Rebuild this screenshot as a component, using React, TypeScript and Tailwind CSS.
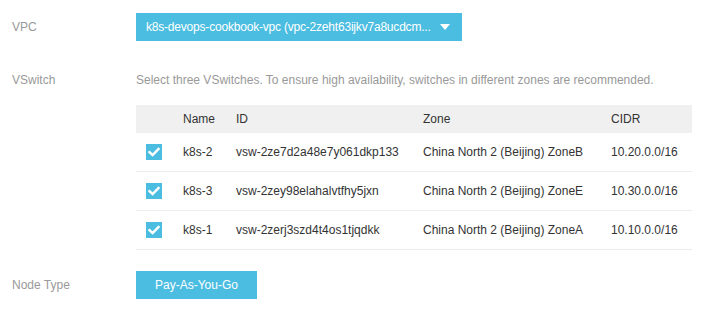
import React from "react";

const rows = [
  { name: "k8s-2", id: "vsw-2ze7d2a48e7y061dkp133", zone: "China North 2 (Beijing) ZoneB", cidr: "10.20.0.0/16" },
  { name: "k8s-3", id: "vsw-2zey98elahalvtfhy5jxn", zone: "China North 2 (Beijing) ZoneE", cidr: "10.30.0.0/16" },
  { name: "k8s-1", id: "vsw-2zerj3szd4t4os1tjqdkk", zone: "China North 2 (Beijing) ZoneA", cidr: "10.10.0.0/16" },
];

function Check() {
  return (
    <div className="w-4 h-4 bg-[#4bbde1] flex items-center justify-center">
      <svg width="12" height="10" viewBox="0 0 12 10">
        <path d="M1.5 5.2 L4.6 8 L10.5 2" stroke="white" strokeWidth="2.4" fill="none" strokeLinecap="square" />
      </svg>
    </div>
  );
}

export default function App() {
  return (
    <div className="w-[716px] h-[314px] bg-white text-[12px] text-[#333] pl-3 pt-[13px]" style={{ fontFamily: '"Liberation Sans", Arial, sans-serif' }}>
      <div className="flex items-center h-7">
        <div className="w-[124px] text-[#999]">VPC</div>
        <div className="w-[326px] h-7 bg-[#4bbde1] text-white flex items-center pl-[10px] pr-3 justify-between whitespace-nowrap">
          <span className="tracking-[-0.2px]">k8s-devops-cookbook-vpc (vpc-2zeht63ijkv7a8ucdcm...</span>
          <svg width="10" height="6" viewBox="0 0 10 6" className="shrink-0"><path d="M0 0 H10 L5 6 Z" fill="white" /></svg>
        </div>
      </div>
      <div className="flex mt-[32px]">
        <div className="w-[124px] text-[#999] leading-[14px]">VSwitch</div>
        <div className="w-[556px]">
          <div className="text-[#999] leading-[14px] whitespace-nowrap">Select three VSwitches. To ensure high availability, switches in different zones are recommended.</div>
          <div className="mt-[18px]">
            <div className="flex items-center h-7 bg-[#f0f0f0]">
              <div className="w-[47px]" />
              <div className="w-[53px]">Name</div>
              <div className="w-[187px]">ID</div>
              <div className="w-[188px]">Zone</div>
              <div>CIDR</div>
            </div>
            {rows.map((r) => (
              <div key={r.name} className="flex items-center h-[39px] border-b border-[#ececec] whitespace-nowrap">
                <div className="w-[47px] pl-[10px]"><Check /></div>
                <div className="w-[53px]">{r.name}</div>
                <div className="w-[187px]">{r.id}</div>
                <div className="w-[188px]">{r.zone}</div>
                <div>{r.cidr}</div>
              </div>
            ))}
          </div>
        </div>
      </div>
      <div className="flex items-center h-7 mt-[21px]">
        <div className="w-[124px] text-[#999]">Node Type</div>
        <div className="w-[121px] h-7 bg-[#4bbde1] text-white flex items-center justify-center">Pay-As-You-Go</div>
      </div>
    </div>
  );
}
